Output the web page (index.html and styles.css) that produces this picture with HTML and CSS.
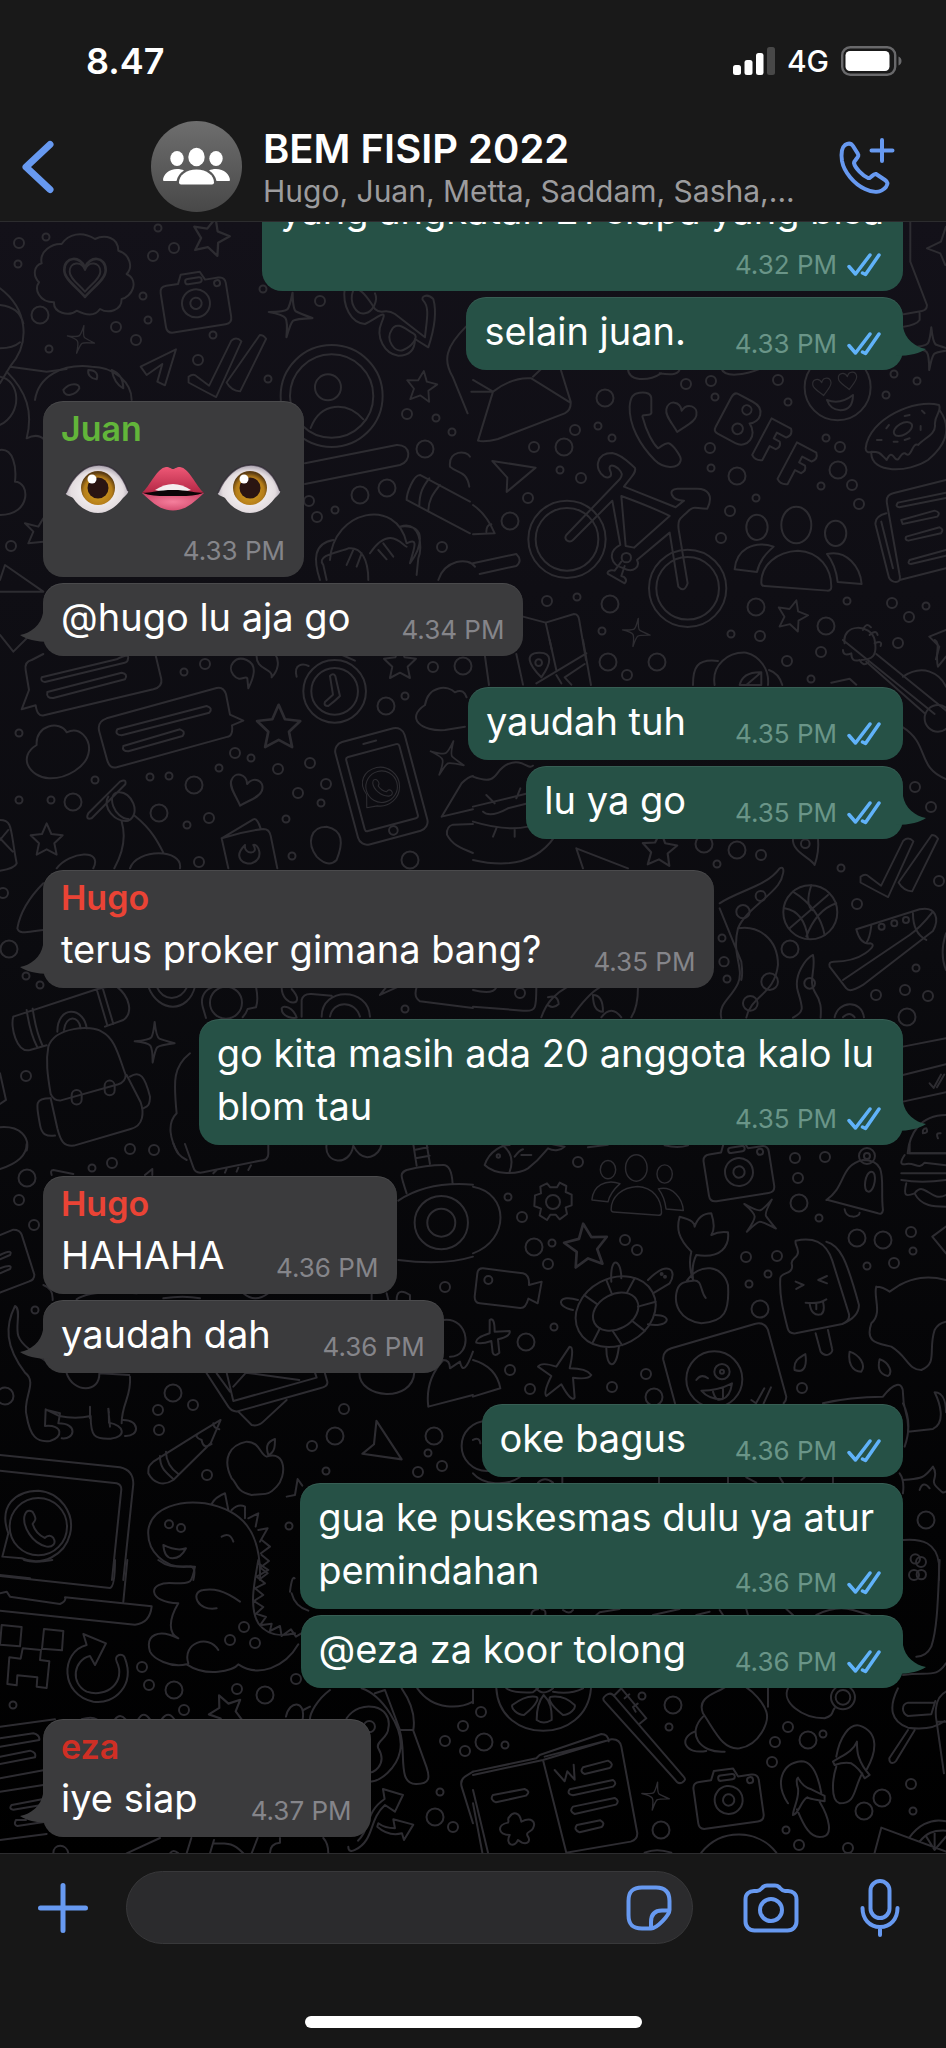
FILE: index.html
```html
<!DOCTYPE html>
<html lang="id">
  <head>
    <meta charset="utf-8" />
    <meta name="viewport" content="width=device-width, initial-scale=1" />
    <title>BEM FISIP 2022</title>
    <link rel="stylesheet" href="styles.css">
  </head>
  <body>
    <div class="app">
      <header class="header">
        <div class="status">
          <div class="clock">8.47</div>
          <div class="status-right">
            <svg class="signal" viewBox="0 0 42 28" aria-hidden="true">
              <rect x="0" y="18" width="8" height="10" rx="2.5" fill="#fff"/>
              <rect x="11.500" y="13" width="8" height="15" rx="2.500" fill="#fff"/>
              <rect x="23" y="6" width="7.500" height="22" rx="2.500" fill="#fff"/>
              <rect x="34" y="0" width="8" height="28" rx="2.500" fill="#484848"/>
            </svg>
            <div class="network">4G</div>
            <svg class="battery" viewBox="0 0 61 30" aria-hidden="true">
              <rect x="1.200" y="1.200" width="53" height="27.500" rx="8" fill="none" stroke="#69696b" stroke-width="2.400"/>
              <rect x="4.500" y="5" width="44" height="20" rx="4.500" fill="#fff"/>
              <path d="M57.500 10.500c4 1.500 4 7.500 0 9z" fill="#69696b"/>
            </svg>
          </div>
        </div>
        <div class="nav">
          <button class="icon-btn back" type="button" aria-label="Kembali">
            <svg width="34" height="54" viewBox="0 0 34 54"><path d="M30 4.500 6 27l24 22.500" stroke-width="7"/></svg>
          </button>
          <svg class="avatar" viewBox="0 0 91 91" aria-hidden="true">
            <defs>
              <linearGradient id="avatarFill" x1="0" y1="0" x2="0" y2="1">
                <stop offset="0" stop-color="#6e6e6e"/>
                <stop offset="1" stop-color="#484848"/>
              </linearGradient>
            </defs>
            <circle cx="45.500" cy="45.500" r="45.500" fill="url(#avatarFill)"/>
            <g fill="#fff">
              <ellipse cx="45.500" cy="36" rx="8.200" ry="9.200"/>
              <ellipse cx="26" cy="37.500" rx="6.700" ry="7.600"/>
              <ellipse cx="65" cy="37.500" rx="6.700" ry="7.600"/>
              <path d="M28 61.500c0-7 7-13 17.500-13S63 54.500 63 61.500q0 2-2 2H30q-2 0-2-2z"/>
              <path d="M12 59.500c0-6 6-11.500 14-11.500 3 0 5 .5 7 1.500-4 2.500-6.500 6-7.500 10.500H13z"/>
              <path d="M79 59.500C79 53.500 73 48 65 48c-3 0-5 .5-7 1.500 4 2.500 6.500 6 7.500 10.500H78z"/>
            </g>
          </svg>
          <div class="group-info">
            <h1 class="group-name">BEM FISIP 2022</h1>
            <div class="members">Hugo, Juan, Metta, Saddam, Sasha,...</div>
          </div>
          <button class="icon-btn call" type="button" aria-label="Panggilan grup">
            <svg width="58" height="58" viewBox="0 0 58 58">
              <path d="M7 7c3-2 6-2 8 1l5 8c2 3-4 6-4 9 1 5 9 13 14 15 3 1 5-5 8-4l9 6c3 2 3 4 1 7-5 6-13 6-21 2C16 46 6 34 4 23 3 16 3 10 7 7z" stroke-width="4"/>
              <path d="M44 2v21M33.500 12.500h21" stroke-width="4"/>
            </svg>
          </button>
        </div>
      </header>

      <main class="chat">
        <!-- wallpaper -->
        <svg class="wallpaper" viewBox="0 222 946 1631" preserveAspectRatio="xMidYMax slice" aria-hidden="true">
          <defs>
            <marker id="d1" markerUnits="userSpaceOnUse" markerWidth="12" markerHeight="12" refX="6" refY="6"><circle class="dot" cx="6" cy="6" r="3.500"/></marker>
            <marker id="d2" markerUnits="userSpaceOnUse" markerWidth="16" markerHeight="16" refX="8" refY="8"><circle class="dot" cx="8" cy="8" r="5"/></marker>
            <marker id="d3" markerUnits="userSpaceOnUse" markerWidth="24" markerHeight="24" refX="12" refY="12"><circle class="dot" cx="12" cy="12" r="8.500"/></marker>
            <path id="star" d="M0-50 14-18 48-14 23 10 30 44 0 28-30 44-23 10-48-14-14-18z"/>
            <path id="spark" d="M0-60Q5-14 14-10T60 4Q14 10 8 16T-6 62Q-6 20-13 11T-60-2Q-16-6-10-14T0-60z"/>
            <path id="heart" d="M0 45C-20 22-46 5-46-15-46-45-10-48 0-20 10-48 46-45 46-15 46 5 20 22 0 45z"/>
            <path id="plane" d="M-65-45 65-25-22 48-20 5z"/>
            <g id="cam">
              <path d="M-80-66h36l12-26h58l12 26h40q20 0 20 20V56q0 20-20 20H-80q-20 0-20-20V-46q0-20 20-20z"/>
              <circle r="42"/><circle r="17"/><rect x="-22" y="-76" width="50" height="16" rx="8"/><circle cx="72" cy="-50" r="9"/>
            </g>
            <g id="people">
              <ellipse cx="0" cy="-75" rx="45" ry="55"/><ellipse cx="-118" cy="-68" rx="32" ry="38"/><ellipse cx="118" cy="-50" rx="32" ry="38"/>
              <path d="M-105 98C-105 45-60 5 5 2 70 5 105 55 105 110q0 12-12 12L-95 108q-10 0-10-10z"/>
              <path d="M-185 58C-180 0-130-30-68-10-90 10-110 30-118 66zM92 12c60-14 100 40 104 90l-72-6C120 60 110 35 92 12z"/>
            </g>
            <path id="phone" d="M-70-95c2-28 10-40 30-42s36 2 35 20v35C0-60-40-80-30-60-20-20 0 15 15 30c12-6 20-18 32-15s40 40 36 52C75 95 30 90 5 65-40 20-72-40-70-95z"/>
            <g id="wa">
              <circle r="86"/><path d="M-108 90-90 20C-120-60-70-108 0-108A106 106 0 1 1-50 95z"/>
              <path d="M-42-30c5-20 15-20 25-14 12 20 10 24 0 36 6 20 20 34 36 42 10-10 20-8 26 0 10 16-2 28-20 26C-20 50-46 0-42-30z"/>
            </g>
            <path id="ticks" d="M-115 32Q-100 20-90 30L-50 60 20-82Q36-96 52-80L-28 96Q-60 80-115 50zM5 50 110-100Q122-100 130-88L48 78Q20 76 5 50z"/>
          </defs>

          <!-- confetti -->
          <polyline class="confetti" marker-start="url(#d1)" marker-mid="url(#d1)" marker-end="url(#d1)" points="46,237 158,228 18,264 143,296 148,320 49,349 213,335 268,379 263,289 452,432 335,510 436,418 715,397 788,402 894,374 917,381 886,395 598,426 612,438 560,470 826,438 711,468 821,486 756,498 577,597 602,631 847,601 926,606 731,634 184,672 19,733 95,780 150,777 169,776 19,800 51,800 219,768 251,758 321,803 286,819 187,825 292,856 405,696 26,976 40,985 405,1009 811,679 717,864 841,868 727,979 722,938 916,968 92,1168 35,1310 428,1453 326,1471 289,1526 508,1197 552,1243 554,1327 819,1218 768,1274 749,1284 913,1251 867,1266 13,1705 440,1792 505,1745 642,1696 669,1727 823,1734 913,1811 786,1830"/>
          <polyline class="confetti" marker-start="url(#d2)" marker-mid="url(#d2)" marker-end="url(#d2)" points="19,243 136,340 153,256 174,248 116,327 198,360 320,301 407,414 309,501 317,517 442,547 11,546 686,384 711,381 778,380 575,430 534,447 581,478 528,498 840,447 852,485 859,504 730,511 721,538 710,448 547,601 892,603 909,617 760,636 821,652 898,643 205,664 235,753 278,769 310,763 298,793 326,784 209,818 199,862 433,667 3,893 26,1076 130,1149 154,1150 627,675 787,661 915,787 931,807 761,855 939,881 857,904 905,990 928,996 876,995 520,993 112,1163 19,1200 34,1225 445,1287 158,1410 193,1405 159,1430 207,1475 344,1409 312,1446 442,1466 418,1472 578,1162 522,1217 548,1264 625,1240 637,1250 510,1370 530,1389 612,1387 646,1374 795,1158 825,1157 798,1178 746,1257 777,1256 911,1232 894,1263 802,1388 244,1627 230,1640 255,1643 142,1667 149,1685 237,1689 184,1710 296,1679 463,1726 445,1741 465,1751 453,1827 481,1712 788,1727 775,1742 772,1762 911,1784 799,1845 848,1848 914,1575 921,1562"/>
          <polyline class="confetti" marker-start="url(#d3)" marker-mid="url(#d3)" marker-end="url(#d3)" points="40,315 425,449 360,495 387,488 605,398 564,447 737,476 510,521 838,470 610,604 756,607 826,626 73,802 194,785 159,813 9,949 410,860 386,706 463,666 608,662 657,662 704,844 737,850 790,949 907,1017 27,1178 173,1393 335,1436 434,1436 5,1396 534,1247 526,1342 654,1397 799,1203 760,1309 857,1238 883,1240 926,1520 174,1690 265,1695 484,1742 673,1705 808,1740 882,1798 864,1811 661,1830 435,1817"/>

          <g transform="translate(0 220) scale(.3333)">
            <path d="M125 130c-8-35 30-60 60-58 20-30 60-40 100-15 30-15 70-5 70 35 35 10 45 50 25 70 40 20 15 70-15 75 0 35-40 45-65 30-20 30-60 10-70 5-25 20-70 5-68-25-45 0-60-40-45-60-20-20-15-50 8-57z"/>
            <use href="#heart" transform="translate(255 170) scale(1.350)"/><use href="#heart" x="255" y="170"/>
            <use href="#star" transform="translate(632 50) rotate(15) scale(1.150)"/>
            <use href="#cam" transform="translate(588 250) rotate(-9)"/>
            <use href="#spark" transform="translate(243 358) rotate(12) scale(.7)"/>
            <use href="#spark" transform="translate(872 284) rotate(5) scale(1.100)"/>
            <path d="M422 440 528 388 495 496 472 485 487 432 440 465z"/>
            <use href="#ticks" transform="translate(675 440) scale(.95)"/>
            <circle cx="995" cy="528" r="153"/><circle cx="995" cy="528" r="125"/><circle cx="984" cy="502" r="39"/>
            <path d="M932 624c30-80 110-80 158-26"/>
            <path d="M1035 200c-10 60 20 110 60 112 40-20 70-50 50-5s10 95 50 100c50 0 50-40 50-50l40 25c20-60 25-110 15-145-20-20-40-5-30 5 20 20 10 60 5 110l-90-70c-30-20-40 5-60-15-20-30-40-70-90-70"/>
            <path d="M1060 210c-15 40 10 75 35 70s40-40 30-60M1175 330c-20 30 10 70 35 60s50-40 30-50-50-40-65-10z"/>
            <use href="#star" transform="translate(1265 500) rotate(8) scale(.95)"/>
            <path d="M0 205c80 60 95 160 30 235L0 490M0 255c40 5 60 20 70 55M0 385c30 0 45-5 60-18M30 440l110 15 60-8M20 455c60 60 80 120 60 200 60-30 70 40 80 60M0 470c60 10 70 110 0 145"/>
            <path d="M105 540c10-70 80-110 170-100 70 0 120 50 120 100M190 510c20-25 50-20 48-5-10 20-45 30-48 5zM265 450c25 0 30 15 25 28-18-2-28-14-25-28zM335 450c25 10 35 30 35 55-20-10-30-30-35-55z"/>
            <path d="M0 690c40-5 50 50 45 95 45 0 50 100-45 100M75 910l40 10 15-25M75 910l25 25-15 35 45-5M0 1115h130L15 1035 0 1080M0 1245l40 50 50-50"/>
            <path d="M915 730 1190 675c45-2 45 50 10 60L915 792"/>
            <path d="M1220 840c0-20 20-75 40-75l150 80M1220 840l190 100M1258 860c0-40 10-60 30-85M1285 875c0-40 20-60 35-80"/>
            <path d="M990 1020c10-150 200-190 230-50 40-20 20 20 10 60 30-40 60-120-30-110 60-20 70 60 55 95l-5 50M960 1080c-20-60-20-110 40-120M1105 1080c0-60-20-100-60-95-20 10-100 20-75 50l10 45M1110 1000c60-90 100-20 110-20M1060 990l-20 45M1085 1000l-15 40M1150 970l30 40M1135 990l25 28"/>
            <path d="M1350 740c-5-50 50-50 60-30M1350 740c20 20 50 10 58 60M1398 320c-60 60-70 100-40 150l45 110M1315 1080c20-60 90-70 110-40"/>
          </g>

          <g transform="translate(473 200) scale(.3333)">
            <path d="M0 540 60 575-5 575M60 575 15 722M60 575Q120 530 175 535M15 722q20 5 60-5L275 640q20-10 18-35L262 505M175 535 292 608M180 530l30-28"/>
            <use href="#phone" transform="translate(540 715)"/>
            <use href="#heart" transform="translate(622 652) rotate(12)"/>
            <g transform="translate(800 658) rotate(28)">
              <path d="M-40-65H10c45 0 50 45 22 62 40 20 30 72-10 72h-60q-15 0-15-15v-100q0-19 13-19z"/><circle cx="6" cy="-35" r="14"/><circle cx="8" cy="28" r="16"/>
            </g>
            <g id="letterF" transform="translate(895 725) rotate(28)"><path d="M-32-62h66q14 14 0 30h-32v20h20q12 12 0 26H2v48q-18 12-34 0z"/></g>
            <use href="#letterF" x="76" y="72"/>
            <circle cx="1094" cy="562" r="99"/><path d="M1062 600q40 15 78-15 0 45-38 46-30-2-40-31z"/>
            <use href="#heart" transform="translate(1048 560) rotate(-8) scale(.6)"/><use href="#heart" transform="translate(1125 542) rotate(-8) scale(.6)"/>
            <path d="M1178 745c10-90 150-150 220-130 10 20-15 30-12 60s-35 40-50 60c-20-10-20 45-40 25-15-5-15 30-30 15-10-15-15-15-25 5-20-20-20-25-45-25-10 5-18 0-18-10zM1195 760c0 60 110 60 170 20 60-50 70-100 35-150"/>
            <ellipse cx="1290" cy="687" rx="30" ry="17" transform="rotate(-30 1290 687)"/>
            <path d="M1212 720h14M1262 725h12M1295 720l15-5M1343 690v-12M1355 640l-8-8M1310 645l-15 3M1240 685l8-10"/>
            <use href="#plane" transform="translate(123 828)"/>
            <circle cx="282" cy="1018" r="116"/><circle cx="282" cy="1018" r="94"/>
            <circle cx="644" cy="1165" r="116"/><circle cx="644" cy="1165" r="94"/>
            <path d="M280 1005 440 838c10-12 8-20-4-32-20-15-30-10-25 5 10 20-5 25-18 18-30-20-25-70 25-70 30 5 50 30 68 45 5 15-15 30-33 56l155 62 25-20c-40 0-50-35-20-36h60c30 0 50 20 30 60-40 0-40-10-60 10-20 20-30 20-26 52l27 162q-10 30-28 10L590 998 492 1080c10 20-10 40-40 25-40-10-50-50-10-70L418 902 300 1020c-10 10-30 0-20-15zM445 888l13 150 25 5 107-95c-40-20-90-40-145-60z"/>
            <circle cx="460" cy="1073" r="14"/><path d="M445 1085 425 1112c-15-5-25 5-20 10l50 28c10-10 0-20-10-22l10-30"/>
            <use href="#people" x="970" y="1050"/>
            <path d="M1419 840 1260 880q-22 5-18 30l38 215q5 25-18 20-14-4-16-20l-38-150q-5-25 32-35M1280 1140l139-35M1225 965l35 140"/>
            <path d="M1275 908 1419 878M1275 908q-10 12 4 14l140-28M1285 960l100-28q20 5 8 18l-104 22zM1300 1010l100-28q14 6 4 18l-98 22q-12-2-6-12zM1310 1080l109-30M1310 1080q-8 12 4 12l105-25"/>
            <use href="#star" transform="translate(958 1247) rotate(15) scale(.95)"/>
            <use href="#spark" transform="translate(490 1297) rotate(8) scale(.7)"/>
            <use href="#spark" transform="translate(1375 445) scale(1.050)"/>
            <path d="M1312 65v120l50 130q0 15-15 18l-55 10M1340 340v20q-10 15-48 20M1419 80l-15 45-42 20 40 15 15 35"/>
            <path d="M0 915c30 20 50 50 65 85l-65 3M40 995q0-20 15-22M0 1090 130 1062q20 20 0 36L20 1122M150 1250l68 18 85-26q14 0 16 20l20 118M218 1268l18 80"/>
            <path d="M1115 1330c-10-60 80-60 90-10s-10 60-40 60M1170 1290q10-25 24-8M1190 1305q20-18 24 0M1205 1330q25-10 18 8M1419 1290l-50 20 30 30-10 38"/>
            <path d="M465 505c0 40 60 40 100 15M560 520q60 10 60-15M745 505c10 30 70 20 120 0"/>
          </g>

          <g transform="translate(0 640) scale(.3333)">
            <path d="M130 42 95 60q-22 5-18 30l10 60-22 58 42-12q5 35 25 30L460 148q28-8 24-30l-18-76"/>
            <path d="M125 112 350 58q40-20 34-2 0 10-10 12L135 126q-15-2-10-14zM142 156 365 98q20 4 10 20L160 174q-22 2-18-18z"/>
            <path d="M320 235 650 144q20-5 28 18l12 62 40 18-34 14q4 30-12 34L350 382q-20 5-28-20L298 275q-8-30 22-40z"/>
            <path d="M352 268 620 198q20 6 8 20L365 286q-22-2-13-18zM370 318l170-50q18 6 8 20L385 334q-20 0-15-16z"/>
            <path d="M110 315c-5-60 70-75 90-38 40-20 70 20 67 55-5 50-70 85-120 83-60-5-95-65-37-100z"/>
            <path d="M745 145c15-30 30-70-5-85s-60 20-40 45 35 0 42 10zM815 112c20-20 25-50 10-70M815 112c5-30-50-20-45-70"/>
            <circle cx="1004" cy="154" r="94"/><circle cx="1004" cy="154" r="70"/>
            <path d="M990 108q10-10 16 0l14 60q-15 15-35 30-15 0-10-12l24-22zM890 110c-10-40 20-40 36-32M1020 42l45 20"/>
            <use href="#star" transform="translate(836 262) scale(1.350)"/>
            <use href="#star" transform="translate(1200 70)"/>
            <path d="M1275 195c10-60 70-60 90-38 20-10 30 0 35 15M1275 195c-60 40-10 80 60 75l60-10"/>
            <g transform="translate(1145 440) rotate(-15)">
              <rect x="-108" y="-160" width="215" height="318" rx="28"/><rect x="-82" y="-112" width="165" height="230" rx="8"/><circle cy="136" r="13"/><path d="M-20-138h40"/>
              <use href="#wa" transform="scale(.55)"/>
            </g>
            <use href="#spark" transform="translate(1342 354) rotate(20) scale(.9)"/>
            <use href="#heart" transform="translate(735 452) rotate(18) scale(1.050)"/>
            <use href="#star" x="140" y="600"/>
            <path d="M265 520 360 425q20-10 16 8L275 535q-20 5-10-15zM325 470c-20 30 20 80 60 72 40-20 10-90-30-85s-10 80 30 80M365 545c15 50 0 100-22 140M405 528c50 40 70 80 85 110M390 685c20-60 160-60 150 0M170 685c40-50 140-60 110 0M130 730c-40 40-70 90-78 135 5 20 30 10 78 5M0 540c40 0 30 30 50 130q-5 15-50 22M0 600l25-30M0 595l38 40"/>
            <path d="M665 595q60-20 125-28 18 0 22 20l20 98M665 595l20 90M665 595 760 538q12-5 22 28M735 615c-40 40 0 60 20 55 40-15 20-60 5-55 20 30-30 30-25 0"/>
            <path d="M980 560c-50 0-60 50-30 90 20 20 40 30 60 10 20-50 20-90-30-100z"/>
            <path d="M1325 530 1385 430q20-20 34-22M1325 530l94-22M1419 552l-60 2q-20 5-18 30c15 30 40 40 78 55"/>
            <use href="#spark" transform="translate(464 1206)"/>
            <path d="M40 1130 290 1048q30-10 60-8c40 30 50 80 20 100l-55 20M40 1130c-10 30 10 110 50 100l50-14M80 1110q10 70 32 112M98 1106q10 70 30 112M290 1048l32 108M308 1044l32 108M172 1175c0-80 80-75 88-10M192 1170c5-45 45-45 50-5"/>
            <path d="M145 1220c20-60 130-65 160-45 40 20 50 70 72 130q0 20-22 28L180 1382q-20 0-28-20c-10-60-15-100-7-142zM152 1375l20 90c10 40 20 55 50 52l170-50c40-10 40-50 30-80L380 1305"/>
            <rect x="215" y="1350" width="30" height="44" rx="15"/><rect x="314" y="1322" width="30" height="44" rx="15"/>
            <path d="M390 1310c30-20 45 0 60 60 0 30-10 30-22 36M150 1375c-50 0-40 20-30 80 5 30 20 35 45 32M0 1300l18 80-18 12M0 1462c60-5 90 30 80 70M570 1240c-50 40-50 80-40 180-30 30-20 80 5 120M445 1040c30 80 120 80 140 0M470 1040c20 45 70 45 92 0M608 1100c-10-40 20-60 40-60h120q8 40 0 62l-25 5q-5 15-15 25M608 1100l10 34"/>
            <circle cx="678" cy="1088" r="48"/>
            <path d="M845 1042c0 60 80 60 30 5M845 1105c0 30 40 30 45 28-10-30-40-40-45-28zM905 1130V1080q5-20 30-18l60 5M965 1130c0-90 140-90 145 0M990 1130c10-50 75-50 90 0M1140 1065l20-25h35zM1250 1042q-10 30 10 42l159 20"/>
          </g>

          <g transform="translate(473 640) scale(.3333)">
            <path d="M35 42 48 135M130 42l20 92M230 0l20 90M330 0l24 135M340 40 190 130M250 105l15 25M335 72l-60 40 20 22"/>
            <path d="M205 112c-40-40-50-72-8-74s40 30 8 74z"/><circle cx="197" cy="68" r="10"/>
            <path d="M660 135c0-50 10-80 75-72M725 135c-10-60 40-100 95-97 40 10 70 50 65 97M888 90q30 10 40 45M800 135q10-40 65-38v38zM865 97l-45 38M1075 128l55-12 20 18"/>
            <path d="M1110 0 1385 222M1210 42l210 170M1180 65l175 155M1290 110c60-40 110-10 129 30M1110 30q0 20 25 10 0 28 25 20 10 20 25 8"/>
            <circle cx="1395" cy="235" r="40"/>
            <path d="M1290 262c80 50 40 120 129 155M1385 0c20 10 0 40 10 80l24-30"/>
            <path d="M0 410c80 30 60-20 105-38s60 20 75 5M0 500l165-40M0 545q100 30 165 15M30 515q20 20 75-10M105 505l60-15M40 465l25 25M130 475l12-30M0 660q170 40 245-70M60 590l10-25M125 590v-25M310 625l155 60M310 625l20 60"/>
            <use href="#star" transform="translate(560 628) rotate(4) scale(1.080)"/>
            <path d="M1025 675c-10-20-70-40-65-80h75q4 40-10 80z"/><circle cx="997" cy="611" r="13"/>
            <use href="#ticks" transform="translate(1272 680) scale(.95)"/>
            <circle cx="1012" cy="817" r="81"/><path d="M960 755q80 50 95 130M1015 736q-20 60 5 75M935 805q60 10 70 92M950 865 1065 765M1090 790q-60 20-90 100"/>
            <path d="M740 790c60-40 140-50 180-105 20-10 10 30-5 50-30 40-100 80-120 130-20 80 20 120 0 165s-60 60-50 104M795 865c60-10 120 30 120 110-10 90-80 90-95 158M740 805l65 160q5 40 0 55"/>
            <circle cx="863" cy="768" r="15"/><circle cx="810" cy="815" r="20"/><circle cx="890" cy="1025" r="25"/><circle cx="832" cy="1090" r="22"/><circle cx="753" cy="965" r="14"/>
            <path d="M1020 945c-20 10-60 60-45 110s20 60-15 78M1020 945c10 40-15 80 5 110s20 50 18 78"/><circle cx="1010" cy="1030" r="16"/>
            <path d="M1150 868 1340 808c50-10 60 30 40 65L1170 1035q-40 25-50 10l-50-65q-4-15 12-15 60 0 95-25t15-30q-30 5-42-42zM1110 1020l200-135q30-20 70-70M1320 820q0 60 40 80M1195 858q-5 40-15 50"/>
            <circle cx="1226" cy="860" r="9"/><circle cx="1264" cy="850" r="9"/><circle cx="1299" cy="840" r="9"/>
            <path d="M1419 880q-20 60 0 110M1085 1132c10-50 80-55 88 0M1110 1132q20-20 35 0M1290 1220l129-25M1290 1305l129-32M1290 1385l129-28M1370 1330l12 14 22-40M1392 1342l22-38"/>
            <path d="M1419 1425c-80 0-110 60-115 115h115M1350 1480q-2-15 10-15 8 15-10 15zM1395 1495q-8-18 8-15"/>
            <path d="M190 1042c0 60 0 75-40 70L0 1100M0 1050q60 15 70-8M205 1132c20-60 60-80 80-92M295 1132q50-70 85-90M495 1042q0 60-20 90M225 1072q30-10 32 20-15 15-30 5M360 1065q30 0 30 50-30 0-30-50M385 1132q30-40 60 0"/>
          </g>

          <g transform="translate(0 1140) scale(.3333)">
            <path d="M80 12q0 50-80 75M520 10c10 30 20 40 40 50M555 12l25 70q5 20 30 15L780 62q25 0 25-20v-30M640 100l10-10M675 98l5-12M710 95l5-12M745 90l8-14M980 12c-10 60 70 70 80 5 30 60 80 30 85-5M1240 12l10 65M1280 12l10 60M1243 30l40-8M1247 55l42-8"/>
            <path d="M1220 160c-20-60-20-60 0-70q60-15 110-15 25 0 28 57M1195 182c60-40 140-55 224-48M1195 360c80 10 160 10 224-10"/>
            <circle cx="1324" cy="248" r="80"/><circle cx="1324" cy="248" r="42"/>
            <path d="M155 105q-5-15 5-15l60 12M435 105l22-18v18M0 285l40-16q20 0 25 15l38 120q0 15-15 20L0 458M0 345q40-20 30 0L0 358M0 385q40-15 30 2L0 400M130 435q30 10 28 45M230 478q40-30 180-18M490 475q60-10 110 0M730 460q35 30 75 0M1115 460v20M1160 460l5 20M1190 480q0-40 40-15v15M1330 540c80-10 90 110 20 110M1285 800q-10-80 45-140 20 0 20 25l30-20q10 50 39-30M1285 800l134-35"/>
            <path d="M45 498c-30 60-30 120 30 200 40 30-10 80 5 130 10 60 30 80 70 75 40-10 40-50-15-45l2-50 40 20q50 10 95 0c0 60 10 70 60 68 50-5 40-40-5-48 0-40-5-60 0-30M45 498c20 10 0 60 10 90s60 60 90 80M175 850c60 0 50 50 10 45M365 850c0-60 30-80 25-140M370 840c50 0 50 50 5 48M140 810l40 10-5 30M270 800v35M325 810l5 50M200 700c20 60 100 60 98 0l90 5"/>
            <path d="M620 700 685 800q15 20 35 12L960 745q25-5 22-20l-8-28M650 700l40 55M680 698l20 85 250-70-5-15M700 740l38-42 160 22M715 815l40 40q20 5 35-10l70-65"/>
            <path d="M1078 698c0 80 160 90 165 0"/>
            <path d="M595 880 662 840l-30 70L520 1020c-30 20-60 10-75-20 0-20 0-20 15-35zM595 880q-15 10 10 20 5 30 30 12M480 948c0 40 20 50 40 70M498 935q0 40 38 68M640 850q0 15 18 18"/>
            <path d="M800 950c60-20 60 60 30 90s-30 20-75 25c-50-10-45-40-60-50-30-60-5-100 45-110 40 0 40 40 60 45zM805 945c-10-30 0-40 20-48 0 20 0 40-20 48z"/>
            <use href="#plane" transform="translate(1140 925) rotate(48) scale(1.050)"/>
            <circle cx="1460" cy="918" r="75"/>
            <path d="M0 945 360 982q40 8 40 50l-30 288M0 992l350 38q14 4 14 18l-28 272M0 1305l90 10"/>
            <use href="#wa" x="115" y="1160"/>
            <path d="M570 1280c-80 10-130-50-125-110 10-70 100-90 170-80 110 20 170 80 165 230M570 1280q20 0 10 40M490 1215q40 20 68 10-15 30-40 30t-28-40zM665 1190q25-15 35 15M635 1092q10-20 40-32l10 50M695 1110q20-20 40-10v35M745 1135l30-15-8 40M775 1170l28-5-23 40M785 1200l25 20-27 20M785 1245l22 18-24 18M783 1285l20 15-20 15"/>
            <circle cx="507" cy="1153" r="12"/><circle cx="543" cy="1164" r="12"/>
            <path d="M860 1070l25-5 8-48 14 20"/>
          </g>

          <g transform="translate(473 1140) scale(.3333)">
            <path d="M35 75C50 30 90 15 110 15M35 75c30 30 100 30 130 10 40-30 50-50 60-60 20 10 40 5 50-5l-40-8M88 15q40 30 22 80M125 50q15-20 25-22M145 45h30M345 22l60-8M575 16q40 10 70 0M0 140c110 20 110 160 0 200"/>
            <circle cx="76" cy="48" r="5"/>
            <path d="M222 130l10 12h20l8-14 20 10-2 18 18 8v32l-18 6 4 20-22 16-12-14h-16l-10 16-22-14 4-20-20-8 2-32 18-6-2-20z"/><circle cx="240" cy="186" r="21"/>
            <use href="#people" transform="translate(490 138) scale(.72)"/>
            <use href="#cam" transform="translate(798 96) rotate(-9)"/>
            <path d="M1060 180c60-40 40-105 110-120 80 0 50 70 60 150q-2 15-15 10L1065 180zM1115 208c5 30 45 25 45 10M1195 95c20 0 10 60-8 60-20 0-10-60 8-60z"/><circle cx="1182" cy="48" r="24"/><circle cx="1182" cy="48" r="9"/>
            <path d="M1310 12v28h109M1295 45q-20 30 0 28c30-10 40 20 60-5l64 8M1285 100h134M1285 120q60 10 134 0M1300 130c-10 40 0 40 25 30 20 40 60 40 94 40M1325 160c30-40 50 30 94 5"/>
            <use href="#spark" transform="translate(862 228) rotate(35)"/>
            <use href="#star" transform="translate(340 318) rotate(-8) scale(1.350)"/>
            <path d="M655 335c-40-40-45-70-35-105 40 10 45 20 45 30 10-30 30-40 50-40 10 30 10 50 0 65 20-10 35-10 50-8 5 40-20 80-95 68q-15 30-10 70M655 335q-10 40 5 85M640 425c40-60 110-50 125 10 5 80-10 110-80 115-70-10-80-60-75-90s20-35 50-38 20 30 38 52"/>
            <path d="M30 385l120 15q20 5 18 35l38-10-12 65-28-14q-8 30-25 28L20 490q-15-2-15-20l8-70q2-16 17-15z"/><circle cx="46" cy="420" r="12"/>
            <g transform="translate(428 515) rotate(-28)"><ellipse rx="125" ry="100"/><ellipse rx="72" ry="52"/><path d="M-60-88-38-45M20-98l-5 46M98-62l-42 28M120 30 66 18M50 92 30 46M-30 98l-5-50M-105 50l40-28"/></g>
            <path d="M415 425c-5-80 30-70 30-10M525 420c60-60 90-30 65 10l-50 30M315 480c-60-20-70 20-15 30M545 525c60 0 40 40-20 28M400 625c0 60 30 70 38-8"/>
            <circle cx="566" cy="402" r="3"/><circle cx="576" cy="410" r="3"/>
            <path d="M50 540q15-10 15 35l45-2q5 15-35 25l4 40q-15 14-20 0l-4-35q-30 10-45 5-5-14 40-28z"/>
            <path d="M290 620q15 0 0 65 50 0 65 20-10 15-55 8l5 60q-10 15-40-40l-45 35q-10-10 15-60l-40-28q10-15 55 0z"/>
            <path d="M595 625 845 552q30-8 40 18l55 200q0 12-8 20M595 625q-28 10-24 35l35 130M835 780l14 10 25-45M872 790l22-48"/>
            <circle cx="724" cy="718" r="84"/><circle cx="747" cy="695" r="23"/><circle cx="747" cy="695" r="6"/><path d="M670 720q15-20 35-5M685 752q50 0 92-22-5 40-30 48-40 0-62-26zM720 755q10 35 30 20v-30"/>
            <path d="M968 302c50-10 90 0 110 60l50 160q4 20-20 30l-140 28q-20 2-24-15c-15-60-25-100-22-150 0-20 40-10 35-40-8-20 20-20 18-40s-10-20-7-33zM1060 305c40 10 60 50 98 190 0 20-10 40-50 57M1028 580l15 55c15 20 40 5 34-10l-12-55M968 425l24 10-22 12M1062 408l-26 12 26 10M998 488q40 5 62-10M1010 490q5 40 35 33 12-10 5-38M1030 490v18"/>
            <path d="M1210 440q20 0 40 15l30-20c40-20 80-30 139-15M1210 440c-10 30 20 80-15 110-20 60 20 60 60 70 50 30 50 70 90 70 50-20 20-60 40-120q10-20 34-25M1378 290l41-30M1378 290l41 50M965 690c-5-30 20-40 32-48 5 30 0 60-32 48zM1130 635c30 10 50 40 35 60-30 0-40-30-35-60zM1220 658c30 10 40 40 25 50-30-5-30-30-25-50z"/>
            <path d="M0 660q70 20 82 85L0 770M0 900q20-10 22 10M1050 790q80-20 180-20c30-40 60-50 60-10 0 60 20 60 15 115l75-8c40-20 20-80 5-110 30 0 34 40 34 60M1290 790q30 60 5 130M1290 1020c50-5 60 0 90-40 20 30-10 40 10 60s20 20 29 15M1340 1050q10-30 30-5M1290 1060q5-40-10-60"/>
            <path d="M0 1000c30 35 100 40 140 12M195 1028q20-20 45 0M268 1012v16M558 1012v16M765 1012v16M820 1012l30 16M920 1012l10 16M985 1020l10-8M1080 1012v16M1290 1200c60-5 100 10 108 70v50"/>
            <circle cx="1327" cy="1257" r="14"/><circle cx="1345" cy="1304" r="14"/>
          </g>

          <g transform="translate(0 1560) scale(.3333)">
            <path d="M345 0q0 80-15 84L0 48M382 0l-12 125M0 100l20-5 10 15 150 22q20-10 15-20l260 27q-5 50-50 55L0 152M72 0q30 10 85 0"/>
            <path d="M5 195l60 6-5 58-60-5zM132 207l58 6-4 58-60-5zM68 265l55 5-3 30 28 4-8 80-30-4 2-28-60-6-2 30-28-4 6-80 34 4z"/>
            <path d="M250 222 318 250 285 315 270 288C220 300 210 370 260 395c60 20 120-30 90-90-10-20 20-30 25-10 30 80-30 140-95 130-100-20-100-150-20-170z"/>
            <path d="M475 0c40 30 60 15 110 20-10 50-10 50-60 50-90-10-80 60 10 60-30 50-30 90 0 105-60-30-100-10-85 40 10 20 60 50 110 38 60 40 140 20 155 0 60 40 140 10 180-60M650 145c-60 10-80-50-40-55 30-5 60 0 110 35M565 310c-20-60 60-90 90-40"/>
            <path d="M775 0c-10 60-30 140 0 190 30 40 70 40 110 30M775 10l30 20-35 20 25 20-30 15 25 20-28 18 28 18-22 20 30 10-18 25 35-5-5 22 30-15 5 30 28-20 15 22 20-12M870 95c5-40 10-45 14-40M875 100q10 40 50 52"/>
            <use href="#star" transform="translate(680 455) rotate(-25) scale(1.080)"/>
            <path d="M0 500 165 478M0 535l100-15q20 5 18 20L0 560M0 590l90-18q20 5 15 20L0 612M0 655l130-24M0 695l130-20M35 735l95-18M35 735q-10 12 5 14l85-14M48 780h30M48 780q-8 15 4 18l80-12M0 840l140-18M245 478q30-10 45 0M345 478q15-20 32 0M415 478q15-28 35 0M485 478q20-28 38 0"/>
            <path d="M990 390c-40 30-60 70-60 88M858 470c10-50 60-50 50 8M910 450l20-10M1040 475c40-60 140-40 125 30 0 30-40 40-30 60 30 50-20 80-28 70M1085 385c60 20 130 120 115 190-10 50-60 90-90 90M1155 390l45 120 40 0q10-60-35-125M1125 400l30-10M1200 515c20 60-10 160 50 157 40 0 40-20 30-50L1240 512"/><circle cx="1108" cy="500" r="17"/>
            <path d="M1252 385c50 70 130 60 167 40M1395 650l24-15M1395 650q-15 10-10 30l34 110"/>
            <path d="M1045 860c0 15 10 15 20 10 60-30 40-90 90-135l30 20 24-50-60-18 5 30c-60 40-40 90-80 125M1135 790q20 15 50 15l-5-27 60 16-28 46-6-20q-40 10-74-20z"/>
            <path d="M160 880c0-30 40-30 45 0M380 880l100-46M560 880l14-46M630 880l12-40M640 850c50 0 60 0 90 30M755 880l18-46M810 880q0-30 30-32v-14M985 880q0-30-15-46M510 880q10-14 25 0"/>
          </g>

          <g transform="translate(473 1560) scale(.3333)">
            <path d="M70 385c10 170 270 170 284 0M100 385q20 15 80 12l15-12M190 385q20 25 50 0M330 385q-40 20-90 10M118 435q40-30 70-25c10 0 10 20-35 55-20 0-40-20-35-30zM212 405c20 20 25 40 24 75q-24 15-45 0 0-50 21-75zM305 435q-30-30-70-25c-10 0-10 20 35 55 20 0 40-20 35-30zM0 430v-40"/>
            <path d="M395 425q-10-10 5-20 15-10 25 5L632 650q10 10-5 18-12 5-20-8zM425 405l20-20 75 90-22 18M455 415l14-12M488 455l-8-14 14-10"/>
            <path d="M690 460c-20-50 40-60 65-78M690 460c40 60 60 110 110 105 60-10 90-80 80-110s-40-60-60-73M690 470c-50 50-10 110 65 105M665 515c-50 20-30 70 35 58M885 440v-55"/>
            <path d="M945 385c-20 40 40 90 110 90 30-10 20-20 30-30"/><circle cx="1110" cy="412" r="36"/><circle cx="1110" cy="412" r="22"/>
            <path d="M1290 345c80-10 100 10 129-35M1275 385c-30 60-20 100 30 118q70 10 110-20M1385 428h-80c-20 5-20 30 0 40l70-5 12-40M1305 510l-56 85c0 20 15 15 20 8l56-92M1419 395c-40 20-30 80-28 90l22 155M1395 485h24M1375 260c20-60 20-160 25-260M1330 290q30 0 45-30M940 147l20 18M1030 165q60-30 110-15l50 15M175 165q0-15 20-17M205 148q15 0 12 17M270 150q20 15 30 0M370 165l10-8 60-10M540 165l80-18M670 165l40-10M740 150l10 15M820 148l5 17"/>
            <use href="#cam" transform="translate(767 720) rotate(-8)"/>
            <use href="#spark" transform="translate(548 708) rotate(8) scale(.7)"/>
            <path d="M0 635 190 595 200 585 385 522q20 0 22 22M0 645l210-45 205-62q25-2 30 22l48 260q0 20-20 25L280 878M210 600l70 278M215 590 400 542M0 690l45 188M0 730l28 148"/>
            <path d="M245 630l30 34 8-30 22 25-3-45M330 622l75-20q20 10 5 22l-75 18q-16-6-5-20zM290 688l130-28q14 10 0 20l-120 26q-20-4-10-18zM300 740l125-26q16 8 4 20L305 762q-18-8-5-22zM312 795l70-14q16 8 4 20l-66 16q-20-8-8-22zM60 705l95-18q20 8 4 20l-90 20q-20-8-9-22z"/>
            <path d="M110 770c10-15 30-15 35 15 30-15 45 0 35 20-5 12-25 10-15 25s-5 30-30 10c-10 25-40 15-25-15-35 0-40-30-5-37 5-8-5-10 5-18z"/>
            <path d="M960 765c0-20 20-50 15-80-5-15-5-30 0-32 10 20 20 30 40 35l40 20v16c-20-5-40-5-52-12-20 10-25 50-43 53zM945 730c-40-60-20-120 40-126 30 0 50 40 60 95M1040 725c30 50 40 100 10 105-40 10-60-40-78-82M1080 605c30-20 60-30 72-60q0 30 5 45 10 30 33 55l-15 10q-15-30-40-45-20-5-50 5zM1090 590c10-60 40-100 70-93 60 20 50 80 22 130M1090 620c-10 30-20 100 10 110 50 0 40-40 68-90"/>
            <path d="M685 878c60-75 170-70 225 0M515 878q35-15 80 0M1205 878l20-75 194 72M1310 832c20-30 60-60 109-48M1340 845c20-25 40-35 79-33M1385 815v55M1360 830l25 40 34-40"/>
          </g>
        </svg>

        <div class="messages">
          <div class="cluster out">
            <div class="bubble stacked">
              <div class="text">yang angkatan 21 siapa yang bisa</div>
              <div class="meta">4.32 PM <svg class="read"><use href="#read"/></svg></div>
            </div>
            <div class="bubble tail">
              <div class="text">selain juan.</div>
              <div class="meta">4.33 PM <svg class="read"><use href="#read"/></svg></div>
            </div>
          </div>

          <div class="cluster in">
            <div class="bubble stacked">
              <div class="sender juan">Juan</div>
              <div class="emojis">
                <svg class="emoji" viewBox="0 0 64 50" role="img" aria-label="👁"><use href="#eye"/></svg>
                <svg class="emoji" viewBox="0 0 64 50" role="img" aria-label="👄"><use href="#mouth"/></svg>
                <svg class="emoji" viewBox="0 0 64 50" role="img" aria-label="👁"><use href="#eye"/></svg>
              </div>
              <div class="meta">4.33 PM</div>
            </div>
            <div class="bubble tail">
              <div class="text">@hugo lu aja go</div>
              <div class="meta">4.34 PM</div>
            </div>
          </div>

          <div class="cluster out">
            <div class="bubble">
              <div class="text">yaudah tuh</div>
              <div class="meta">4.35 PM <svg class="read"><use href="#read"/></svg></div>
            </div>
            <div class="bubble tail">
              <div class="text">lu ya go</div>
              <div class="meta">4.35 PM <svg class="read"><use href="#read"/></svg></div>
            </div>
          </div>

          <div class="cluster in">
            <div class="bubble tail">
              <div class="sender hugo">Hugo</div>
              <div class="text">terus proker gimana bang?</div>
              <div class="meta">4.35 PM</div>
            </div>
          </div>

          <div class="cluster out">
            <div class="bubble tail">
              <div class="text">go kita masih ada 20 anggota kalo lu<br>blom tau</div>
              <div class="meta">4.35 PM <svg class="read"><use href="#read"/></svg></div>
            </div>
          </div>

          <div class="cluster in">
            <div class="bubble">
              <div class="sender hugo">Hugo</div>
              <div class="text">HAHAHA</div>
              <div class="meta">4.36 PM</div>
            </div>
            <div class="bubble tail">
              <div class="text">yaudah dah</div>
              <div class="meta">4.36 PM</div>
            </div>
          </div>

          <div class="cluster out">
            <div class="bubble">
              <div class="text">oke bagus</div>
              <div class="meta">4.36 PM <svg class="read"><use href="#read"/></svg></div>
            </div>
            <div class="bubble">
              <div class="text">gua ke puskesmas dulu ya atur<br>pemindahan</div>
              <div class="meta">4.36 PM <svg class="read"><use href="#read"/></svg></div>
            </div>
            <div class="bubble tail">
              <div class="text">@eza za koor tolong</div>
              <div class="meta">4.36 PM <svg class="read"><use href="#read"/></svg></div>
            </div>
          </div>

          <div class="cluster in">
            <div class="bubble tail">
              <div class="sender eza">eza</div>
              <div class="text">iye siap</div>
              <div class="meta">4.37 PM</div>
            </div>
          </div>
        </div>
      </main>

      <footer class="footer">
        <div class="composer">
          <button class="icon-btn add" type="button" aria-label="Tambah">
            <svg width="50" height="50" viewBox="0 0 50 50"><path d="M25 2.500v45M2.500 25h45" stroke-width="5"/></svg>
          </button>
          <div class="field">
            <input class="input" type="text" aria-label="Pesan">
            <button class="icon-btn" type="button" aria-label="Stiker">
              <svg width="46" height="46" viewBox="0 0 46 46">
                <path d="M25 43.500H16C6 43.500 2.500 39 2.500 30V16C2.500 6.500 7 2.500 16 2.500h14C39 2.500 43.500 7 43.500 16v9C43.500 30 31 43.500 25 43.500z" stroke-width="4"/>
                <path d="M25 43v-6c0-8 4-11.500 11-11.500h7" stroke-width="4"/>
              </svg>
            </button>
          </div>
          <button class="icon-btn camera" type="button" aria-label="Kamera">
            <svg width="56" height="50" viewBox="0 0 56 50">
              <path d="M11 8h3c3 0 4-2 6-4q1.500-1.500 4-1.500h8q2.500 0 4 1.500c2 2 3 4 6 4h3c5 0 8.500 3 8.500 8.500v22c0 5-3.500 9-9 9h-33c-5.500 0-9-4-9-9v-22C2.500 11 6 8 11 8z" stroke-width="4"/>
              <circle cx="28" cy="27" r="11" stroke-width="4"/>
            </svg>
          </button>
          <button class="icon-btn mic" type="button" aria-label="Pesan suara">
            <svg width="40" height="58" viewBox="0 0 40 58">
              <rect x="10.500" y="2" width="19" height="37" rx="9.500" stroke-width="4"/>
              <path d="M2.500 29c0 11 7 19 17.500 19s17.500-8 17.500-19M20 48v8" stroke-width="4"/>
            </svg>
          </button>
        </div>
        <div class="home-bar"></div>
      </footer>
    </div>

    <!-- shared icons -->
    <svg class="sprite" aria-hidden="true">
      <defs>
        <radialGradient id="ballFill" cx=".5" cy=".55" r=".6">
          <stop offset="0" stop-color="#fff"/><stop offset=".7" stop-color="#e4dde0"/><stop offset="1" stop-color="#8d8596"/>
        </radialGradient>
        <radialGradient id="irisFill" cx=".5" cy=".6" r=".55">
          <stop offset="0" stop-color="#d9a722"/><stop offset=".75" stop-color="#b57d1a"/><stop offset="1" stop-color="#5d3d12"/>
        </radialGradient>
        <linearGradient id="upperLip" x1="0" y1="0" x2="0" y2="1">
          <stop offset="0" stop-color="#ee5876"/><stop offset="1" stop-color="#a91e3c"/>
        </linearGradient>
        <radialGradient id="lowerLip" cx=".5" cy=".5" r=".6">
          <stop offset="0" stop-color="#f57f9c"/><stop offset="1" stop-color="#d04569"/>
        </radialGradient>
        <symbol id="read" viewBox="0 0 34 24">
          <path d="M2 13.500 8.500 21 23 2M15.500 20l3 1.500L32 2" fill="none" stroke="#60b2f9" stroke-width="3.500" stroke-linecap="round" stroke-linejoin="round"/>
        </symbol>
        <symbol id="eye" viewBox="0 0 64 50">
          <path d="M1 29C8 12 20 1 34 1s23 9 29 26c1 2-2 4-5 7-7 9-15 15-25 15S14 43 8 34c-3-2-8-3-7-5z" fill="url(#ballFill)"/>
          <path d="M1 29C8 12 20 1 34 1s23 9 29 26" fill="none" stroke="#2c2530" stroke-width="1.500" opacity=".7"/>
          <circle cx="33" cy="24" r="17" fill="url(#irisFill)"/>
          <circle cx="33" cy="24" r="10.500" fill="#2a1512"/>
          <circle cx="27" cy="15" r="4.500" fill="#fff"/>
        </symbol>
        <symbol id="mouth" viewBox="0 0 64 50">
          <path d="M1 29C9 22 16 4 25 3c4 0 5 2 7 2s3-2 7-2c9 1 16 19 24 26L32 34z" fill="url(#upperLip)"/>
          <path d="M14 26q18-12 36 0l-18 4z" fill="#f4eef0"/>
          <path d="M1 29q31 6 62 0C53 38 46 46 32 46.500 18 46 11 38 1 29z" fill="url(#lowerLip)"/>
          <path d="M1 28.500c10 1 14-2.500 31-2.500s21 3.500 31 2.500c-9 4-20 3.500-31 3.500s-22 .5-31-3.500z" fill="#0c0507"/>
        </symbol>
      </defs>
    </svg>
  </body>
</html>
```
FILE: styles.css
```css
* {
  box-sizing: border-box;
  padding: 0;
  margin: 0;
}
body {
  background-color: #000;
  color: #fff;
  font-family: Inter, "Liberation Sans", sans-serif;
}
.app {
  display: flex;
  flex-direction: column;
  height: 100vh;
}

/* header */
.header {
  background-color: #191919;
  border-bottom: 1px solid #2c2c2e;
}
.status {
  display: flex;
  justify-content: space-between;
  align-items: center;
  height: 121px;
  padding: 0 44px 0 86px;
}
.clock {
  font-size: 36px;
  font-weight: 600;
}
.status-right {
  display: flex;
  align-items: center;
  gap: 12px;
}
.network {
  font-size: 30px;
  font-weight: 500;
}
.signal {
  width: 42px;
  height: 28px;
}
.battery {
  width: 61px;
  height: 30px;
}
.nav {
  display: flex;
  align-items: center;
  padding: 0 50px 9px 20px;
}
.icon-btn {
  display: flex;
  flex: none;
  background: none;
  border: none;
  cursor: pointer;
}
.icon-btn svg {
  fill: none;
  stroke: #6799f0;
  stroke-linecap: round;
  stroke-linejoin: round;
}
.back {
  margin-right: 97px;
}
.avatar {
  flex: none;
  width: 91px;
  height: 91px;
}
.group-info {
  flex: 1;
  min-width: 0;
  padding-left: 21px;
}
.group-name {
  font-size: 40px;
  font-weight: 600;
  line-height: 48px;
}
.members {
  color: #9c9c9e;
  font-size: 30px;
  line-height: 36px;
  white-space: nowrap;
}

/* chat */
.chat {
  position: relative;
  flex: 1;
  min-height: 0;
  overflow: hidden;
  background: linear-gradient(#131119, #0b0b0f 45%, #030304 80%, #000);
}
.wallpaper {
  position: absolute;
  inset: 0;
  width: 100%;
  height: 100%;
  fill: none;
  stroke: #2d2c31;
  stroke-width: 6;
  stroke-linejoin: round;
  stroke-linecap: round;
}
.wallpaper .dot {
  stroke: #2d2c31;
  stroke-width: 2;
}
.confetti {
  stroke: none;
}
.messages {
  position: relative;
  display: flex;
  flex-direction: column;
  justify-content: flex-end;
  gap: 31px;
  height: 100%;
  padding: 0 43px 16px;
}
.cluster {
  display: flex;
  flex-direction: column;
  gap: 6px;
}
.in {
  align-items: flex-start;
}
.out {
  align-items: flex-end;
}
.bubble {
  position: relative;
  display: grid;
  padding: 8px 19px 12px 18px;
  border-radius: 20px;
  background-color: #3b3b3d;
  box-shadow: inset 0 1px rgba(255, 255, 255, 0.08);
}
.out .bubble {
  background-color: #265146;
}
.text {
  font-size: 38px;
  line-height: 53px;
}
/* keeps the last line clear of the time */
.text::after {
  content: "";
  display: inline-block;
  width: 154px;
}
.out .text {
  padding-right: 10px;
}
.out .text::after {
  width: 188px;
}
.out .stacked .text {
  padding-right: 0;
}
.stacked .text::after {
  content: none;
}
.sender {
  margin-bottom: 5px;
  font-size: 34px;
  font-weight: 600;
  line-height: 40px;
}
.juan {
  color: #62b53a;
}
.hugo {
  color: #ea4335;
}
.eza {
  color: #cf2f25;
}
.text,
.meta {
  grid-column: 1;
}
.text,
.text + .meta {
  grid-row: 2;
}
.meta {
  display: flex;
  align-items: flex-end;
  align-self: end;
  justify-self: end;
  gap: 10px;
  color: #85858a;
  font-size: 26px;
  line-height: 28px;
}
.out .meta {
  padding-right: 3px;
  color: #6a9588;
}
.stacked .text + .meta,
.stacked .meta {
  grid-row: 3;
  margin-top: 14px;
}
.read {
  width: 34px;
  height: 24px;
  margin-bottom: 2px;
}
.emojis {
  display: flex;
  align-items: center;
  gap: 12px;
  height: 69px;
  padding: 0 4px;
}
.emoji {
  width: 64px;
  height: 50px;
}

/* bubble tails */
.tail::after {
  content: "";
  position: absolute;
  bottom: 13px;
  left: -23px;
  width: 31px;
  height: 30px;
  background-color: inherit;
  clip-path: path("M31 0H23C21 12 11 20 0 22C6 26 15 29 31 29Z");
}
.out .tail::after {
  right: -23px;
  left: auto;
  clip-path: path("M0 0H8C10 12 20 20 31 22C25 26 16 29 0 29Z");
}

/* footer */
.footer {
  padding: 17px 0 20px;
  background-color: #171717;
  border-top: 1px solid #2c2c2e;
}
.composer {
  display: flex;
  align-items: center;
  padding: 0 46px 0 38px;
}
.add {
  margin-right: 38px;
}
.field {
  display: flex;
  flex: 1;
  align-items: center;
  min-width: 0;
  height: 73px;
  padding: 0 20px 0 30px;
  border: 1px solid #38383a;
  border-radius: 37px;
  background-color: #2b2b2d;
}
.input {
  flex: 1;
  min-width: 0;
  background: none;
  border: none;
  outline: none;
  color: #fff;
  font: inherit;
  font-size: 38px;
}
.camera {
  margin: 0 61px 0 50px;
}
.home-bar {
  width: 337px;
  height: 12px;
  margin: 72px auto 0;
  border-radius: 6px;
  background-color: #fff;
}
.sprite {
  position: absolute;
  width: 0;
  height: 0;
}
```
